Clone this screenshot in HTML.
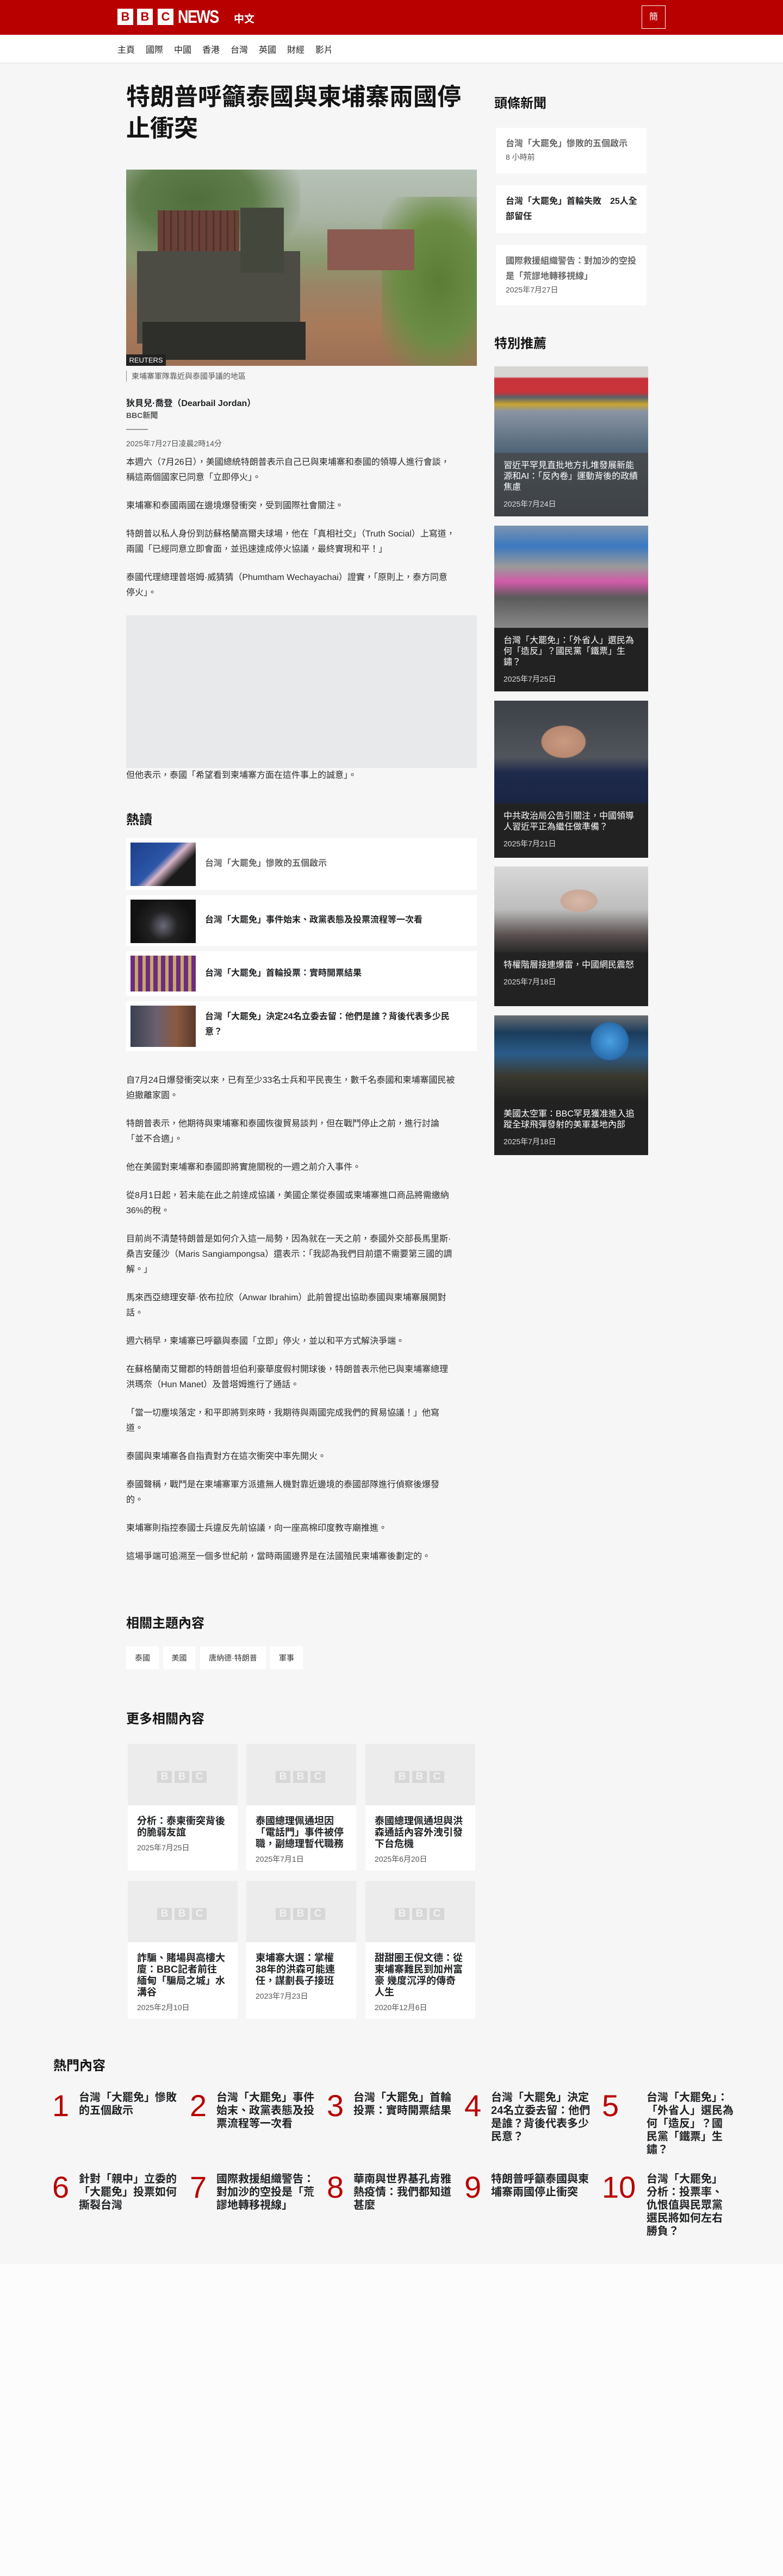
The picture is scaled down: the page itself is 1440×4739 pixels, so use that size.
<!DOCTYPE html>
<html lang="zh-Hant"><head><meta charset="utf-8">
<style>
*{margin:0;padding:0;box-sizing:border-box}
body{width:1440px;height:4739px;background:#f6f6f6;font-family:"Liberation Sans","Noto Sans CJK TC",sans-serif;color:#202224;position:relative;overflow:hidden}
.a{position:absolute}
.hdr{left:0;top:0;width:1440px;height:64px;background:#b80000}
.blk{width:29px;height:30px;background:#fff;color:#b80000;font-weight:bold;font-size:22px;line-height:30px;text-align:center;top:16px}
.nav{left:0;top:64px;width:1440px;height:51px;background:#fff;box-shadow:0 1px 2px rgba(0,0,0,.08)}
.nav span{position:absolute;top:14px;font-size:16px;color:#222}
h1{position:absolute;left:232px;top:150px;font-size:44px;line-height:58px;font-weight:bold;white-space:nowrap;color:#141414}
.sh{font-size:24px;font-weight:bold;color:#141414}
.card{background:#fff;left:912px;width:277px;padding:0 14px 0 18px;white-space:nowrap}
.card b{display:block;font-size:16px;line-height:28px}
.card i{font-style:normal;font-size:14px;color:#545658}
.promo{left:909px;width:283px;background:#222;white-space:nowrap}
.promo .t{padding:14px 10px 0 17px;color:#fff;font-size:16px;line-height:20px}
.promo .d{padding:10px 17px 0 17px;color:#ddd;font-size:14px}
.body{left:232px;width:640px;font-size:16px;line-height:28px;color:#2a2a2a;white-space:nowrap}
.body p{margin-bottom:24px}
.hl{left:232px;width:645px;background:#fff}
.hl .th{position:absolute;left:8px;top:8px;width:120px;height:80px}
.hl b{position:absolute;left:145px;font-size:16px;line-height:24px;white-space:nowrap}
.tag{top:3029px;height:42px;background:#fff;font-size:14px;line-height:42px;text-align:center;color:#333}
.mc{width:202px;background:#fff}
.mc .im{height:113px;background:#ececec;position:relative}
.mc .im div{position:absolute;top:50px;width:27px;height:22px;background:#d7d7d7;color:#f2f2f2;font-weight:bold;font-size:19px;line-height:22px;text-align:center}
.mc b{display:block;padding:19px 16px 0 17px;font-size:18px;line-height:21px;white-space:nowrap}
.mc i{display:block;padding:7px 17px 0;font-style:normal;font-size:14px;color:#545658}
.num{font-size:56px;color:#b80000;line-height:56px}
.ht{font-size:20px;font-weight:bold;line-height:24px;white-space:nowrap;color:#202224}
</style></head><body>

<div class="a hdr"></div>
<div class="a blk" style="left:216px">B</div>
<div class="a blk" style="left:252px">B</div>
<div class="a blk" style="left:290px">C</div>
<div class="a" style="left:327px;top:13px;color:#fff;font-weight:bold;font-size:33px;line-height:36px;letter-spacing:-2px;transform:scaleX(.82);transform-origin:left">NEWS</div>
<div class="a" style="left:430px;top:20px;color:#fff;font-size:19px;font-weight:bold">中文</div>
<div class="a" style="left:1180px;top:10px;width:44px;height:43px;border:1px solid #fff;color:#fff;font-size:16px;line-height:41px;text-align:center">簡</div>

<div class="a nav">
<span style="left:216px">主頁</span><span style="left:268px">國際</span><span style="left:320px">中國</span><span style="left:372px">香港</span><span style="left:424px">台灣</span><span style="left:476px">英國</span><span style="left:528px">財經</span><span style="left:580px">影片</span>
</div>

<h1>特朗普呼籲泰國與柬埔寨兩國停<br>止衝突</h1>

<div class="a" style="left:232px;top:312px;width:645px;height:361px;background:linear-gradient(180deg,#b7c2b8 0%,#a9b4a4 25%,#8c9a70 45%,#9a8466 60%,#a87a5a 80%,#9c7055 100%);overflow:hidden">
 <div class="a" style="left:0;top:0;width:320px;height:180px;background:radial-gradient(ellipse at 40% 30%,#4f6e3c 0,#5f7d4a 40%,rgba(120,140,100,0) 75%)"></div>
 <div class="a" style="left:470px;top:50px;width:175px;height:311px;background:radial-gradient(ellipse at 60% 50%,#5a7d35 0,#6b8c44 50%,rgba(110,140,70,0) 90%)"></div>
 <div class="a" style="left:370px;top:110px;width:160px;height:75px;background:#8b5a50"></div>
 <div class="a" style="left:58px;top:75px;width:150px;height:80px;background:repeating-linear-gradient(90deg,#6b4037 0 10px,#4a3430 10px 13px)"></div>
 <div class="a" style="left:20px;top:150px;width:300px;height:170px;background:#4c4c44"></div>
 <div class="a" style="left:30px;top:280px;width:300px;height:70px;background:#2e2e2a"></div>
 <div class="a" style="left:210px;top:70px;width:80px;height:120px;background:#44483c"></div>
 <div class="a" style="left:0;top:340px;width:73px;height:21px;background:#222;color:#fff;font-size:13px;line-height:21px;text-align:center">REUTERS</div>
</div>
<div class="a" style="left:232px;top:682px;border-left:1px solid #888;padding-left:9px;font-size:14px;line-height:20px;color:#545658">柬埔寨軍隊靠近與泰國爭議的地區</div>
<div class="a" style="left:232px;top:728px;font-size:16px;font-weight:bold;color:#202224">狄貝兒·喬登（Dearbail Jordan）</div>
<div class="a" style="left:232px;top:754px;font-size:14px;font-weight:bold;color:#545658">BBC新聞</div>
<div class="a" style="left:232px;top:789px;width:40px;height:2px;background:#999"></div>
<div class="a" style="left:232px;top:806px;font-size:14px;color:#545658">2025年7月27日凌晨2時14分</div>

<div class="a body" style="top:837px">
<p>本週六（7月26日），美國總統特朗普表示自己已與柬埔寨和泰國的領導人進行會談，<br>稱這兩個國家已同意「立即停火」。</p>
<p>柬埔寨和泰國兩國在邊境爆發衝突，受到國際社會關注。</p>
<p>特朗普以私人身份到訪蘇格蘭高爾夫球場，他在「真相社交」（Truth Social）上寫道，<br>兩國「已經同意立即會面，並迅速達成停火協議，最終實現和平！」</p>
<p>泰國代理總理普塔姆·威猜猜（Phumtham Wechayachai）證實，「原則上，泰方同意<br>停火」。</p>
</div>
<div class="a" style="left:232px;top:1132px;width:645px;height:281px;background:#e8e9ea"></div>
<div class="a body" style="top:1413px"><p>但他表示，泰國「希望看到柬埔寨方面在這件事上的誠意」。</p></div>

<div class="a sh" style="left:232px;top:1488px">熱讀</div>
<div class="a hl" style="top:1542px;height:95px"><div class="th" style="background:linear-gradient(135deg,#1d3f8a 0%,#2c56a8 45%,#d9b6c8 55%,#1a1a1a 70%)"></div><b style="top:35px;color:#666">台灣「大罷免」慘敗的五個啟示</b></div>
<div class="a hl" style="top:1647px;height:93px"><div class="th" style="background:radial-gradient(circle at 50% 60%,#6a6a78 0,#222 35%,#111 70%)"></div><b style="top:34px">台灣「大罷免」事件始末、政黨表態及投票流程等一次看</b></div>
<div class="a hl" style="top:1750px;height:82px"><div class="th" style="height:66px;background:repeating-linear-gradient(90deg,#6a2d80 0 8px,#c9a56a 8px 14px)"></div><b style="top:29px">台灣「大罷免」首輪投票：實時開票結果</b></div>
<div class="a hl" style="top:1842px;height:92px"><div class="th" style="height:76px;background:linear-gradient(90deg,#3a4050 0%,#6b6070 40%,#8a5a40 70%,#5a3a2a 100%)"></div><b style="top:15px;line-height:28px">台灣「大罷免」決定24名立委去留：他們是誰？背後代表多少民<br>意？</b></div>

<div class="a body" style="top:1974px">
<p>自7月24日爆發衝突以來，已有至少33名士兵和平民喪生，數千名泰國和柬埔寨國民被<br>迫撤離家園。</p>
<p>特朗普表示，他期待與柬埔寨和泰國恢復貿易談判，但在戰鬥停止之前，進行討論<br>「並不合適」。</p>
<p>他在美國對柬埔寨和泰國即將實施關稅的一週之前介入事件。</p>
<p>從8月1日起，若未能在此之前達成協議，美國企業從泰國或柬埔寨進口商品將需繳納<br>36%的稅。</p>
<p>目前尚不清楚特朗普是如何介入這一局勢，因為就在一天之前，泰國外交部長馬里斯·<br>桑吉安蓬沙（Maris Sangiampongsa）還表示：「我認為我們目前還不需要第三國的調<br>解。」</p>
<p>馬來西亞總理安華·依布拉欣（Anwar Ibrahim）此前曾提出協助泰國與柬埔寨展開對<br>話。</p>
<p>週六稍早，柬埔寨已呼籲與泰國「立即」停火，並以和平方式解決爭端。</p>
<p>在蘇格蘭南艾爾郡的特朗普坦伯利豪華度假村開球後，特朗普表示他已與柬埔寨總理<br>洪瑪奈（Hun Manet）及普塔姆進行了通話。</p>
<p>「當一切塵埃落定，和平即將到來時，我期待與兩國完成我們的貿易協議！」他寫<br>道。</p>
<p>泰國與柬埔寨各自指責對方在這次衝突中率先開火。</p>
<p>泰國聲稱，戰鬥是在柬埔寨軍方派遣無人機對靠近邊境的泰國部隊進行偵察後爆發<br>的。</p>
<p>柬埔寨則指控泰國士兵違反先前協議，向一座高棉印度教寺廟推進。</p>
<p>這場爭端可追溯至一個多世紀前，當時兩國邊界是在法國殖民柬埔寨後劃定的。</p>
</div>

<div class="a sh" style="left:232px;top:2966px">相關主題內容</div>
<div class="a tag" style="left:232px;width:60px">泰國</div>
<div class="a tag" style="left:300px;width:59px">美國</div>
<div class="a tag" style="left:368px;width:121px">唐納德·特朗普</div>
<div class="a tag" style="left:497px;width:60px">軍事</div>

<div class="a sh" style="left:232px;top:3142px">更多相關內容</div>
<div class="a mc" style="left:235px;top:3208px;height:233px"><div class="im"><div style="left:54px">B</div><div style="left:86px">B</div><div style="left:118px">C</div></div><b>分析：泰柬衝突背後<br>的脆弱友誼</b><i>2025年7月25日</i></div>
<div class="a mc" style="left:453px;top:3208px;height:233px"><div class="im"><div style="left:54px">B</div><div style="left:86px">B</div><div style="left:118px">C</div></div><b>泰國總理佩通坦因<br>「電話門」事件被停<br>職，副總理暫代職務</b><i>2025年7月1日</i></div>
<div class="a mc" style="left:672px;top:3208px;height:233px"><div class="im"><div style="left:54px">B</div><div style="left:86px">B</div><div style="left:118px">C</div></div><b>泰國總理佩通坦與洪<br>森通話內容外洩引發<br>下台危機</b><i>2025年6月20日</i></div>
<div class="a mc" style="left:235px;top:3460px;height:254px"><div class="im"><div style="left:54px">B</div><div style="left:86px">B</div><div style="left:118px">C</div></div><b>詐騙、賭場與高樓大<br>廈：BBC記者前往<br>緬甸「騙局之城」水<br>溝谷</b><i>2025年2月10日</i></div>
<div class="a mc" style="left:453px;top:3460px;height:254px"><div class="im"><div style="left:54px">B</div><div style="left:86px">B</div><div style="left:118px">C</div></div><b>柬埔寨大選：掌權<br>38年的洪森可能連<br>任，謀劃長子接班</b><i>2023年7月23日</i></div>
<div class="a mc" style="left:672px;top:3460px;height:254px"><div class="im"><div style="left:54px">B</div><div style="left:86px">B</div><div style="left:118px">C</div></div><b>甜甜圈王倪文德：從<br>柬埔寨難民到加州富<br>豪 幾度沉浮的傳奇<br>人生</b><i>2020年12月6日</i></div>

<!-- sidebar -->
<div class="a sh" style="left:909px;top:170px">頭條新聞</div>
<div class="a card" style="top:235px;height:84px;padding-top:16px"><b style="color:#666">台灣「大罷免」慘敗的五個啟示</b><i>8 小時前</i></div>
<div class="a card" style="top:341px;height:88px;padding-top:16px"><b>台灣「大罷免」首輪失敗　25人全<br>部留任</b></div>
<div class="a card" style="top:451px;height:111px;padding-top:16px"><b style="color:#666">國際救援組織警告：對加沙的空投<br>是「荒謬地轉移視線」</b><i>2025年7月27日</i></div>

<div class="a sh" style="left:909px;top:612px">特別推薦</div>
<div class="a promo" style="top:674px;height:276px;background:linear-gradient(180deg,#555b61,#3e4246)"><div style="height:159px;background:linear-gradient(180deg,#d8d6d3 0%,#d8d6d3 12%,#c8333a 14%,#c8333a 30%,#59626a 36%,#c9a431 44%,#8a95a2 52%,#4d6377 100%)"></div><div class="t">習近平罕見直批地方扎堆發展新能<br>源和AI：「反內卷」運動背後的政績<br>焦慮</div><div class="d">2025年7月24日</div></div>
<div class="a promo" style="top:967px;height:305px"><div style="height:188px;background:linear-gradient(180deg,#7d95b0 0%,#3a78c0 20%,#9a9a9a 40%,#d25aa8 55%,#5a5a5a 70%,#888 100%)"></div><div class="t">台灣「大罷免」：「外省人」選民為<br>何「造反」？國民黨「鐵票」生<br>鏽？</div><div class="d">2025年7月25日</div></div>
<div class="a promo" style="top:1289px;height:289px"><div style="height:189px;background:radial-gradient(ellipse at 45% 40%,#c99a80 0,#b88870 18%,transparent 19%),linear-gradient(180deg,#3d4147 0%,#50555b 55%,#1e2a4c 70%,#1a2442 100%)"></div><div class="t">中共政治局公告引關注，中國領導<br>人習近平正為繼任做準備？</div><div class="d">2025年7月21日</div></div>
<div class="a promo" style="top:1594px;height:257px"><div style="height:158px;background:radial-gradient(ellipse at 55% 40%,#d8b8a8 0,#c9a898 15%,transparent 16%),linear-gradient(180deg,#d8d8d8 0%,#bdbdbd 50%,#5a5050 80%,#2a2a2a 100%)"></div><div class="t">特權階層接連爆雷，中國網民震怒</div><div class="d">2025年7月18日</div></div>
<div class="a promo" style="top:1868px;height:257px"><div style="height:158px;background:radial-gradient(circle at 75% 30%,#4aa0e0 0,#2a6fb0 14%,transparent 15%),linear-gradient(180deg,#6a6e72 0%,#1b3c5c 20%,#2a5c8a 45%,#3a3a30 70%,#222 100%)"></div><div class="t">美國太空軍：BBC罕見獲准進入追<br>蹤全球飛彈發射的美軍基地內部</div><div class="d">2025年7月18日</div></div>

<div class="a sh" style="left:98px;top:3780px">熱門內容</div>
<div class="a num" style="left:96px;top:3846px">1</div><div class="a ht" style="left:145px;top:3847px">台灣「大罷免」慘敗<br>的五個啟示</div>
<div class="a num" style="left:349px;top:3846px">2</div><div class="a ht" style="left:398px;top:3847px">台灣「大罷免」事件<br>始末、政黨表態及投<br>票流程等一次看</div>
<div class="a num" style="left:601px;top:3846px">3</div><div class="a ht" style="left:650px;top:3847px">台灣「大罷免」首輪<br>投票：實時開票結果</div>
<div class="a num" style="left:854px;top:3846px">4</div><div class="a ht" style="left:903px;top:3847px">台灣「大罷免」決定<br>24名立委去留：他們<br>是誰？背後代表多少<br>民意？</div>
<div class="a num" style="left:1107px;top:3846px">5</div><div class="a ht" style="left:1189px;top:3847px">台灣「大罷免」：<br>「外省人」選民為<br>何「造反」？國<br>民黨「鐵票」生<br>鏽？</div>
<div class="a num" style="left:96px;top:3996px">6</div><div class="a ht" style="left:145px;top:3997px">針對「親中」立委的<br>「大罷免」投票如何<br>撕裂台灣</div>
<div class="a num" style="left:349px;top:3996px">7</div><div class="a ht" style="left:398px;top:3997px">國際救援組織警告：<br>對加沙的空投是「荒<br>謬地轉移視線」</div>
<div class="a num" style="left:601px;top:3996px">8</div><div class="a ht" style="left:650px;top:3997px">華南與世界基孔肯雅<br>熱疫情：我們都知道<br>甚麼</div>
<div class="a num" style="left:854px;top:3996px">9</div><div class="a ht" style="left:903px;top:3997px">特朗普呼籲泰國與柬<br>埔寨兩國停止衝突</div>
<div class="a num" style="left:1107px;top:3996px">10</div><div class="a ht" style="left:1189px;top:3997px">台灣「大罷免」<br>分析：投票率、<br>仇恨值與民眾黨<br>選民將如何左右<br>勝負？</div>

<div class="a" style="left:0;top:4165px;width:1440px;height:574px;background:#fcfcfc"></div>
</body></html>
